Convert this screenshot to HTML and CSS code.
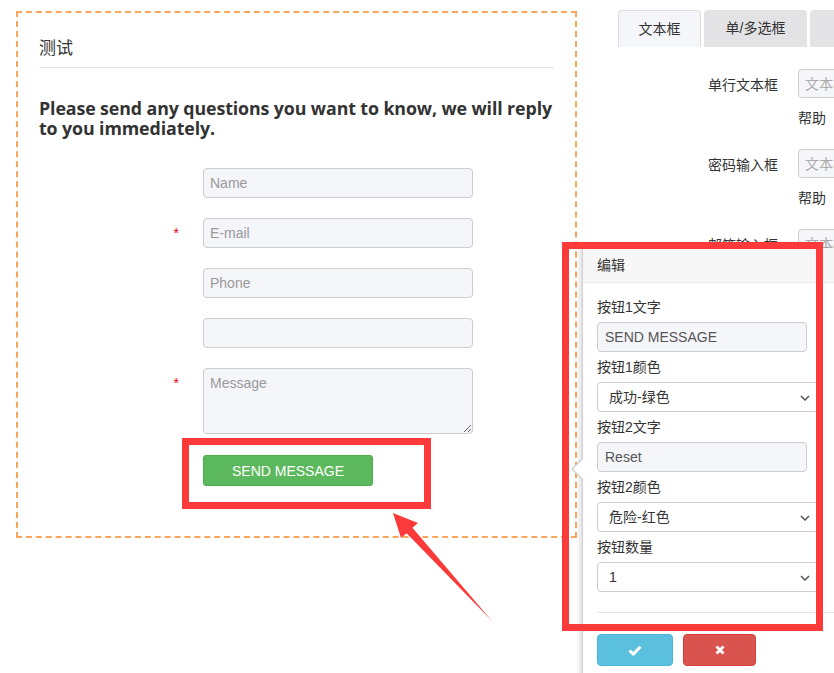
FILE: index.html
```html
<!DOCTYPE html>
<html lang="zh">
<head>
<meta charset="utf-8">
<title>编辑</title>
<link rel="stylesheet" href="styles.css">
</head>
<body>
<div class="page">
  <div class="left">
    <div class="title">测试</div>
    <h2 class="heading">Please send any questions you want to know, we will reply to you immediately.</h2>
    <form class="cform">
      <div class="row"><span class="req"></span><input class="field" placeholder="Name"></div>
      <div class="row"><span class="req">*</span><input class="field" placeholder="E-mail"></div>
      <div class="row"><span class="req"></span><input class="field" placeholder="Phone"></div>
      <div class="row"><span class="req"></span><input class="field" placeholder=""></div>
      <div class="row"><span class="req">*</span><textarea class="field area" placeholder="Message"></textarea></div>
      <div class="btnrow"><button type="button" class="send">SEND MESSAGE</button></div>
    </form>
  </div>
  <div class="right">
    <div class="tabs">
      <div class="tab active">文本框</div>
      <div class="tab">单/多选框</div>
      <div class="tab">下拉框</div>
    </div>
    <div class="rform">
      <div class="rrow"><label class="rlabel">单行文本框</label><input class="rinput" placeholder="文本框"></div>
      <div class="help">帮助</div>
      <div class="rrow"><label class="rlabel">密码输入框</label><input class="rinput" placeholder="文本框"></div>
      <div class="help">帮助</div>
      <div class="rrow"><label class="rlabel">邮箱输入框</label><input class="rinput" placeholder="文本框"></div>
    </div>
  </div>
</div>

<div class="popover">
  <div class="pop-head">编辑</div>
  <div class="pop-body">
    <div class="grp"><div class="plabel">按钮1文字</div><input class="pinput" value="SEND MESSAGE"></div>
    <div class="grp"><div class="plabel">按钮1颜色</div>
      <div class="sel"><span>成功-绿色</span><svg class="chev" width="10" height="6" viewBox="0 0 10 6"><path d="M1 1l4 4 4-4" fill="none" stroke="#555" stroke-width="1.5"/></svg></div></div>
    <div class="grp"><div class="plabel">按钮2文字</div><input class="pinput" value="Reset"></div>
    <div class="grp"><div class="plabel">按钮2颜色</div>
      <div class="sel"><span>危险-红色</span><svg class="chev" width="10" height="6" viewBox="0 0 10 6"><path d="M1 1l4 4 4-4" fill="none" stroke="#555" stroke-width="1.5"/></svg></div></div>
    <div class="grp"><div class="plabel">按钮数量</div>
      <div class="sel"><span>1</span><svg class="chev" width="10" height="6" viewBox="0 0 10 6"><path d="M1 1l4 4 4-4" fill="none" stroke="#555" stroke-width="1.5"/></svg></div></div>
    <hr class="sep">
    <div class="actions">
      <button type="button" class="ok"><svg width="14" height="11" viewBox="0 0 14 11"><path d="M1.5 5.5l3.8 3.6L12.5 1.8" fill="none" stroke="#fff" stroke-width="3" stroke-linejoin="round"/></svg></button>
      <button type="button" class="cancel"><svg width="10" height="10" viewBox="0 0 10 10"><path d="M1.5 1.5l7 7M8.5 1.5l-7 7" stroke="#fff" stroke-width="2.8"/></svg></button>
    </div>
  </div>
</div>

<div class="mark mark-btn"></div>
<div class="mark mark-pop"></div>
<svg class="arrow" width="834" height="673" viewBox="0 0 834 673">
  <polygon points="393,513 418,523 412.4,527.8 492,621 406.6,533.2 401,538" fill="#fd3a3a"/>
</svg>
</body>
</html>
```

FILE: styles.css
```css
html, body {
  margin: 0;
  padding: 0;
}
body {
  width: 834px;
  height: 673px;
  overflow: hidden;
  position: relative;
  background: #fff;
  color: #333;
  font-family: "Liberation Sans", "Noto Sans CJK SC", sans-serif;
  font-size: 14px;
}
.page {
  display: flex;
  align-items: flex-start;
}
.left {
  box-sizing: border-box;
  margin: 11px 0 0 16px;
  width: 561px;
  height: 527px;
  border: 2px dashed #f8a65c;
  padding: 26px 21px 0 21px;
  flex-shrink: 0;
}
.title {
  font-size: 17px;
  line-height: 20px;
  padding-bottom: 8px;
  border-bottom: 1px solid #e5e5e5;
}
.heading {
  margin: 30px 0 0 0;
  font-family: "Open Sans", "Noto Sans", sans-serif;
  font-weight: 700;
  font-size: 17.8px;
  line-height: 20px;
  letter-spacing: -0.1px;
  color: #333;
}
.cform {
  margin-top: 30px;
}
.row {
  display: flex;
  align-items: flex-start;
  margin-bottom: 20px;
}
.req {
  width: 140px;
  padding-right: 24px;
  text-align: right;
  color: #e00;
  line-height: 30px;
  height: 30px;
  font-size: 14px;
}
.field {
  box-sizing: border-box;
  width: 270px;
  height: 30px;
  border: 1px solid #ccc;
  border-radius: 4px;
  background: #f5f6fa;
  padding: 0 6px;
  font-family: "Liberation Sans", sans-serif;
  font-size: 14px;
  color: #555;
  margin: 0;
}
.field::placeholder {
  color: #999;
}
.area {
  height: 66px;
  padding-top: 6px;
  resize: vertical;
}
.row:nth-child(5) {
  margin-bottom: 21px;
}
.btnrow {
  padding-left: 164px;
}
.send {
  width: 170px;
  height: 31px;
  background: #5cb85c;
  border: 1px solid #4cae4c;
  border-radius: 3px;
  color: #fff;
  font-family: "Liberation Sans", sans-serif;
  font-size: 14px;
  padding: 0;
}
.right {
  margin-left: 41px;
  padding-top: 10px;
  flex: 1;
  min-width: 0;
}
.tabs {
  display: flex;
  gap: 3px;
  white-space: nowrap;
}
.tab {
  box-sizing: border-box;
  height: 37px;
  line-height: 37px;
  text-align: center;
  background: #e3e3e5;
  border-radius: 4px 4px 0 0;
  flex-shrink: 0;
  width: 103px;
}
.tab.active {
  width: 83px;
  background: #f5f6fa;
  border: 1px solid #ddd;
  border-bottom: none;
  line-height: 36px;
}
.rform {
  padding-top: 22px;
}
.rrow {
  display: flex;
  align-items: center;
  gap: 20px;
}
.rlabel {
  width: 160px;
  text-align: right;
  flex-shrink: 0;
}
.rinput {
  box-sizing: border-box;
  width: 200px;
  height: 29px;
  border: 1px solid #ccc;
  border-radius: 4px;
  background: #f5f6fa;
  padding: 0 6px;
  font-family: "Liberation Sans", "Noto Sans CJK SC", sans-serif;
  font-size: 14px;
  flex-shrink: 0;
}
.rinput::placeholder {
  color: #aaa;
}
.help {
  margin: 10px 0 21px 180px;
  line-height: 20px;
}
.popover {
  position: absolute;
  left: 582px;
  top: 248px;
  width: 270px;
  height: 440px;
  background: #fff;
  border-left: 1px solid #d0d0d0;
  box-shadow: -2px 0 5px rgba(0, 0, 0, 0.15);
}
.popover::before {
  content: "";
  position: absolute;
  left: -12px;
  top: 210px;
  border-style: solid;
  border-width: 11px 11px 11px 0;
  border-color: transparent #cfcfcf transparent transparent;
}
.popover::after {
  content: "";
  position: absolute;
  left: -10px;
  top: 211px;
  border-style: solid;
  border-width: 10px 10px 10px 0;
  border-color: transparent #fff transparent transparent;
}
.pop-head {
  box-sizing: border-box;
  height: 35px;
  line-height: 34px;
  padding: 0 14px;
  background: #f7f7f7;
  border-bottom: 1px solid #ebebeb;
}
.pop-body {
  padding: 14px 14px 0 14px;
}
.grp {
  margin-bottom: 5px;
}
.plabel {
  line-height: 20px;
  margin-bottom: 5px;
}
.pinput {
  box-sizing: border-box;
  display: block;
  width: 210px;
  height: 30px;
  border: 1px solid #ccc;
  border-radius: 4px;
  background: #f5f6fa;
  padding: 0 7px;
  font-family: "Liberation Sans", sans-serif;
  font-size: 14px;
  color: #555;
  margin: 0;
}
.sel {
  box-sizing: border-box;
  position: relative;
  width: 222px;
  height: 30px;
  line-height: 28px;
  border: 1px solid #ccc;
  border-radius: 4px;
  background: #fff;
  padding: 0 11px;
  color: #333;
}
.chev {
  position: absolute;
  right: 8px;
  top: 12px;
}
.sep {
  border: none;
  border-top: 1px solid #e5e5e5;
  margin: 20px 0 21px 0;
}
.actions {
  display: flex;
  gap: 10px;
}
.actions button {
  height: 32px;
  border-radius: 4px;
  padding: 0;
  display: flex;
  align-items: center;
  justify-content: center;
}
.ok {
  width: 76px;
  background: #5bc0de;
  border: 1px solid #46b8da;
}
.cancel {
  width: 73px;
  background: #d9534f;
  border: 1px solid #d43f3a;
}
.mark {
  position: absolute;
  box-sizing: border-box;
  border: 7px solid #fd3a3a;
  pointer-events: none;
}
.mark-btn {
  left: 182px;
  top: 438px;
  width: 249px;
  height: 71px;
}
.mark-pop {
  left: 562px;
  top: 242px;
  width: 261px;
  height: 389px;
}
.arrow {
  position: absolute;
  left: 0;
  top: 0;
  pointer-events: none;
}
```
